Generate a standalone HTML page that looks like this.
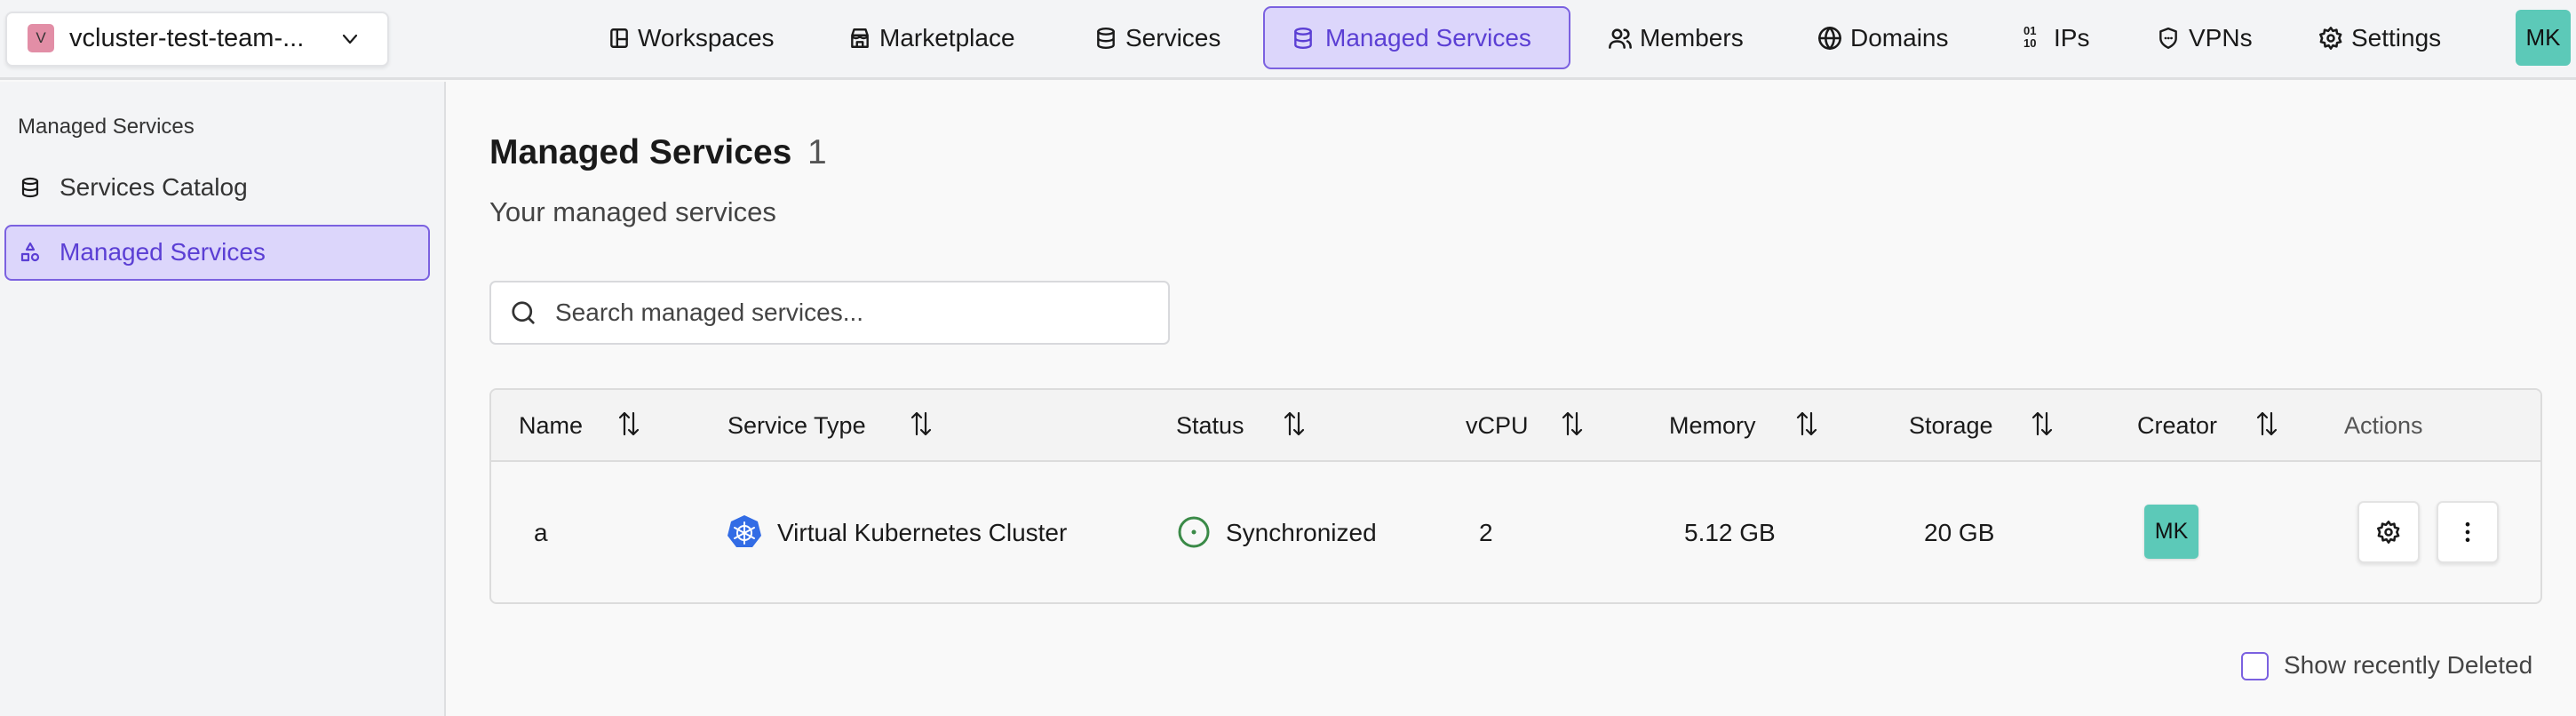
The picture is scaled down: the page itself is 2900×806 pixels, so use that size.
<!DOCTYPE html>
<html><head><meta charset="utf-8"><style>
*{box-sizing:border-box;margin:0;padding:0}
body{width:2900px;height:806px;overflow:hidden;background:#f9f9f9;font-family:"Liberation Sans",sans-serif;color:#1a1a1a;position:relative}
.a{position:absolute;white-space:nowrap}
.t{font-size:28px;line-height:1}
svg{position:absolute;fill:none;stroke:currentColor;stroke-width:2.2;stroke-linecap:round;stroke-linejoin:round}
.th{font-size:27px;color:#1a1a1a;top:464px}
.arr{top:462px;width:28px;height:30px}
</style></head><body>
<!-- header -->
<div class="a" style="left:0;top:0;width:2900px;height:90px;background:#f3f4f6;border-bottom:3px solid #dedfe1"></div>
<div class="a" style="left:6px;top:13px;width:432px;height:62px;background:#fff;border:2px solid #e2e3e6;border-radius:8px;box-shadow:0 2px 4px rgba(0,0,0,.08)"></div>
<div class="a" style="left:31px;top:27px;width:30px;height:32px;background:#e28ea6;border-radius:5px;font-size:17px;color:#333;text-align:center;line-height:32px">V</div>
<div class="a t" style="left:78px;top:29px;font-size:29px">vcluster-test-team-...</div>
<svg style="left:382px;top:32px;width:24px;height:24px" viewBox="0 0 24 24"><path d="M5 8l7 8 7-8"/></svg>

<svg style="left:684px;top:29px;width:26px;height:28px" viewBox="0 0 24 24"><rect x="4" y="3" width="16" height="18" rx="2"/><path d="M10 3v18M10 13h10"/></svg>
<div class="a t" style="left:718px;top:29px">Workspaces</div>
<svg style="left:955px;top:29px;width:26px;height:28px" viewBox="0 0 24 24"><path d="M4 9l2-6h12l2 6M4 9h16v12H4zM4 9c0 2 2 3 4 3s4-1 4-3c0 2 2 3 4 3s4-1 4-3M9 21v-5h6v5"/></svg>
<div class="a t" style="left:990px;top:29px">Marketplace</div>
<svg style="left:1232px;top:29px;width:26px;height:28px" viewBox="0 0 24 24"><ellipse cx="12" cy="5" rx="8" ry="3"/><path d="M4 5v14c0 1.7 3.6 3 8 3s8-1.3 8-3V5M4 12c0 1.7 3.6 3 8 3s8-1.3 8-3"/></svg>
<div class="a t" style="left:1267px;top:29px">Services</div>
<div class="a" style="left:1422px;top:7px;width:346px;height:71px;background:#dcd6fb;border:2px solid #7b61e0;border-radius:9px"></div>
<svg style="left:1454px;top:29px;width:26px;height:28px;color:#5b3fd4" viewBox="0 0 24 24"><ellipse cx="12" cy="5" rx="8" ry="3"/><path d="M4 5v14c0 1.7 3.6 3 8 3s8-1.3 8-3V5M4 12c0 1.7 3.6 3 8 3s8-1.3 8-3"/></svg>
<div class="a t" style="left:1492px;top:29px;color:#5b3fd4">Managed Services</div>
<svg style="left:1810px;top:29px;width:28px;height:28px" viewBox="0 0 24 24"><circle cx="9" cy="8" r="4"/><path d="M2 21c0-4 3-6 7-6s7 2 7 6M16 4a4 4 0 010 8M19 15c2 1 3 3 3 6"/></svg>
<div class="a t" style="left:1846px;top:29px">Members</div>
<svg style="left:2046px;top:29px;width:28px;height:28px" viewBox="0 0 24 24"><circle cx="12" cy="12" r="10"/><path d="M2 12h20M12 2c3 3 4 6 4 10s-1 7-4 10c-3-3-4-6-4-10s1-7 4-10"/></svg>
<div class="a t" style="left:2083px;top:29px">Domains</div>
<div class="a" style="left:2278px;top:28px;font-size:13px;line-height:14px;font-weight:bold">01<br>10</div>
<div class="a t" style="left:2312px;top:29px">IPs</div>
<svg style="left:2428px;top:28px;width:26px;height:30px" viewBox="0 0 24 24"><path d="M12 2l8 3v7c0 5-4 8-8 10-4-2-8-5-8-10V5z"/><path d="M9 12h.5M12 12h.5M15 12h.5"/></svg>
<div class="a t" style="left:2464px;top:29px">VPNs</div>
<svg style="left:2610px;top:29px;width:28px;height:28px" viewBox="0 0 24 24"><circle cx="12" cy="12" r="3"/><path d="M12 2l2 3 3.5-1 .5 3.5 3.5 1-1.5 3.5 1.5 3.5-3.5 1-.5 3.5-3.5-1-2 3-2-3-3.5 1-.5-3.5-3.5-1L3.5 12 2 8.5l3.5-1L6 4l3.5 1z"/></svg>
<div class="a t" style="left:2647px;top:29px">Settings</div>
<div class="a" style="left:2832px;top:11px;width:62px;height:63px;background:#5cc9b8;border-radius:6px;font-size:26px;text-align:center;line-height:63px;color:#111">MK</div>

<!-- sidebar -->
<div class="a" style="left:0;top:92px;width:502px;height:714px;background:#f3f4f6;border-right:2px solid #dedfe1"></div>
<div class="a" style="left:20px;top:129px;font-size:24px;color:#333">Managed Services</div>
<svg style="left:22px;top:197px;width:24px;height:28px" viewBox="0 0 24 24"><ellipse cx="12" cy="5" rx="8" ry="3"/><path d="M4 5v14c0 1.7 3.6 3 8 3s8-1.3 8-3V5M4 12c0 1.7 3.6 3 8 3s8-1.3 8-3"/></svg>
<div class="a t" style="left:67px;top:197px;color:#333">Services Catalog</div>
<div class="a" style="left:5px;top:253px;width:479px;height:63px;background:#dcd6fb;border:2px solid #7b61e0;border-radius:8px"></div>
<svg style="left:22px;top:270px;width:24px;height:28px;color:#5b3fd4" viewBox="0 0 24 24"><path d="M12 2l4 7H8zM3 14h7v7H3zM17.5 14a3.5 3.5 0 110 7 3.5 3.5 0 010-7z"/></svg>
<div class="a t" style="left:67px;top:270px;color:#5b3fd4">Managed Services</div>

<!-- main -->
<div class="a" style="left:551px;top:150px;font-size:39px;font-weight:bold;color:#1a1a1a">Managed Services</div>
<div class="a" style="left:909px;top:150px;font-size:39px;color:#555">1</div>
<div class="a" style="left:551px;top:221px;font-size:31px;color:#444">Your managed services</div>

<div class="a" style="left:551px;top:316px;width:766px;height:72px;background:#fff;border:2px solid #d8d9dc;border-radius:7px"></div>
<svg style="left:574px;top:337px;width:30px;height:30px;color:#333" viewBox="0 0 24 24"><circle cx="11" cy="11" r="8"/><path d="M17 17l4 4"/></svg>
<div class="a t" style="left:625px;top:338px;color:#444">Search managed services...</div>

<div class="a" style="left:551px;top:437px;width:2311px;height:243px;border:2px solid #dcdcdc;border-radius:8px;background:#f8f8f8;overflow:hidden">
 <div style="height:81px;background:#f3f3f3;border-bottom:2px solid #dcdcdc"></div>
</div>
<div class="a th" style="left:584px">Name</div>
<div class="a th" style="left:819px">Service Type</div>
<div class="a th" style="left:1324px">Status</div>
<div class="a th" style="left:1650px">vCPU</div>
<div class="a th" style="left:1879px">Memory</div>
<div class="a th" style="left:2149px">Storage</div>
<div class="a th" style="left:2406px">Creator</div>
<div class="a th" style="left:2639px;color:#555">Actions</div>
<svg class="arr" style="left:694px" viewBox="0 0 28 30"><path d="M9 27V3M4 8l5-5 5 5M19 3v24M14 22l5 5 5-5"/></svg>
<svg class="arr" style="left:1023px" viewBox="0 0 28 30"><path d="M9 27V3M4 8l5-5 5 5M19 3v24M14 22l5 5 5-5"/></svg>
<svg class="arr" style="left:1443px" viewBox="0 0 28 30"><path d="M9 27V3M4 8l5-5 5 5M19 3v24M14 22l5 5 5-5"/></svg>
<svg class="arr" style="left:1756px" viewBox="0 0 28 30"><path d="M9 27V3M4 8l5-5 5 5M19 3v24M14 22l5 5 5-5"/></svg>
<svg class="arr" style="left:2020px" viewBox="0 0 28 30"><path d="M9 27V3M4 8l5-5 5 5M19 3v24M14 22l5 5 5-5"/></svg>
<svg class="arr" style="left:2285px" viewBox="0 0 28 30"><path d="M9 27V3M4 8l5-5 5 5M19 3v24M14 22l5 5 5-5"/></svg>
<svg class="arr" style="left:2538px" viewBox="0 0 28 30"><path d="M9 27V3M4 8l5-5 5 5M19 3v24M14 22l5 5 5-5"/></svg>

<div class="a t" style="left:601px;top:586px">a</div>
<svg style="left:818px;top:579px;width:40px;height:40px;stroke:none" viewBox="0 0 40 40"><path fill="#326ce5" d="M20 1l15 7 4 16-10 13H11L1 24 5 8z"/><g stroke="#fff" stroke-width="2" fill="none"><circle cx="20" cy="21" r="8"/><path d="M20 9v24M9 15l22 12M9 27l22-12"/></g></svg>
<div class="a t" style="left:875px;top:586px">Virtual Kubernetes Cluster</div>
<svg style="left:1325px;top:580px;width:38px;height:38px;color:#3a8a47;stroke-width:3" viewBox="0 0 38 38"><circle cx="19" cy="19" r="16"/><circle cx="19" cy="19" r="2.5" fill="#3a8a47" stroke="none"/></svg>
<div class="a t" style="left:1380px;top:586px">Synchronized</div>
<div class="a t" style="left:1665px;top:586px">2</div>
<div class="a t" style="left:1896px;top:586px">5.12 GB</div>
<div class="a t" style="left:2166px;top:586px">20 GB</div>
<div class="a" style="left:2414px;top:568px;width:61px;height:61px;background:#5cc9b8;border-radius:5px;font-size:25px;text-align:center;line-height:61px;color:#111;box-shadow:0 1px 3px rgba(0,0,0,.15)">MK</div>
<div class="a" style="left:2654px;top:564px;width:70px;height:70px;background:#fff;border:2px solid #e3e3e3;border-radius:7px;box-shadow:0 2px 4px rgba(0,0,0,.1)"></div>
<svg style="left:2675px;top:585px;width:28px;height:28px" viewBox="0 0 24 24"><circle cx="12" cy="12" r="3"/><path d="M12 2l2 3 3.5-1 .5 3.5 3.5 1-1.5 3.5 1.5 3.5-3.5 1-.5 3.5-3.5-1-2 3-2-3-3.5 1-.5-3.5-3.5-1L3.5 12 2 8.5l3.5-1L6 4l3.5 1z"/></svg>
<div class="a" style="left:2743px;top:564px;width:70px;height:70px;background:#fff;border:2px solid #e3e3e3;border-radius:7px;box-shadow:0 2px 4px rgba(0,0,0,.1)"></div>
<svg style="left:2764px;top:585px;width:28px;height:28px;stroke:none;fill:#111" viewBox="0 0 24 24"><circle cx="12" cy="4.5" r="2"/><circle cx="12" cy="12" r="2"/><circle cx="12" cy="19.5" r="2"/></svg>

<div class="a" style="left:2523px;top:734px;width:31px;height:32px;border:2.5px solid #7b61e0;border-radius:6px;background:#fff"></div>
<div class="a t" style="left:2571px;top:735px;color:#444">Show recently Deleted</div>
</body></html>
